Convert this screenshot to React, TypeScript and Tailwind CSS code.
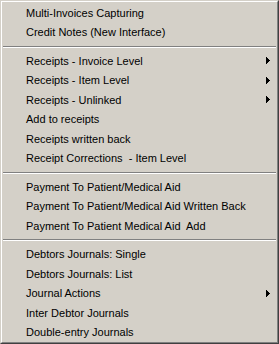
import React from "react";

type Entry = { label?: string; sub?: boolean; sep?: boolean };

const entries: Entry[] = [
  { label: "Multi-Invoices Capturing" },
  { label: "Credit Notes (New Interface)" },
  { sep: true },
  { label: "Receipts - Invoice Level", sub: true },
  { label: "Receipts - Item Level", sub: true },
  { label: "Receipts - Unlinked", sub: true },
  { label: "Add to receipts" },
  { label: "Receipts written back" },
  { label: "Receipt Corrections  - Item Level" },
  { sep: true },
  { label: "Payment To Patient/Medical Aid" },
  { label: "Payment To Patient/Medical Aid Written Back" },
  { label: "Payment To Patient Medical Aid  Add" },
  { sep: true },
  { label: "Debtors Journals: Single" },
  { label: "Debtors Journals: List" },
  { label: "Journal Actions", sub: true },
  { label: "Inter Debtor Journals" },
  { label: "Double-entry Journals" },
];

const SubArrow = () => (
  <svg width="4" height="7" viewBox="0 0 4 7" className="block" shapeRendering="crispEdges">
    <path d="M0 0h1v7H0zM1 1h1v5H1zM2 2h1v3H2zM3 3h1v1H3z" fill="#000" />
  </svg>
);

const MenuRow = ({ label, sub }: { label: string; sub?: boolean }) => (
  <div className="flex h-[19.5px] items-center justify-between pl-[23px] pr-[6px]">
    <span className="whitespace-pre text-[11px] text-black">{label}</span>
    {sub && <SubArrow />}
  </div>
);

const Separator = () => (
  <div className="flex h-[9px] flex-col justify-center">
    <div className="h-px bg-[#808080]" />
    <div className="h-px bg-white" />
  </div>
);

export default function App() {
  return (
    <div
      className="h-[344px] w-[279px] border border-t-[#d4d0c8] border-l-[#d4d0c8] border-b-[#404040] border-r-[#404040] bg-[#d4d0c8]"
      style={{ fontFamily: '"Liberation Sans", Arial, sans-serif' }}
    >
      <div className="h-full border border-t-white border-l-white border-b-[#808080] border-r-[#808080] p-px">
        {entries.map((e, i) =>
          e.sep ? <Separator key={i} /> : <MenuRow key={i} label={e.label!} sub={e.sub} />
        )}
      </div>
    </div>
  );
}
